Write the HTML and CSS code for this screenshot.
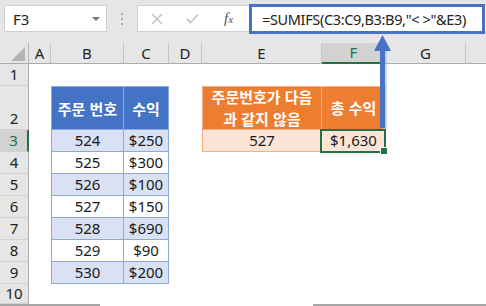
FILE: index.html
```html
<!DOCTYPE html>
<html lang="ko">
<head>
<meta charset="utf-8">
<link rel="stylesheet" href="styles.css">
</head>
<body>
<div class="app">
  <div class="topbar">
    <div class="namebox"><span class="nb-text">F3</span><span class="dd"></span></div>
    <div class="dots"><i></i><i></i><i></i></div>
    <div class="fbar">
      <svg class="ic ic-x" width="12" height="12" viewBox="0 0 12 12"><path d="M1 1L11 11M11 1L1 11" stroke="#c3c3c3" stroke-width="1.6" fill="none"/></svg>
      <svg class="ic ic-ok" width="13" height="11" viewBox="0 0 13 11"><path d="M1 6L4.5 9.5L12 1.5" stroke="#c3c3c3" stroke-width="1.8" fill="none"/></svg>
      <span class="fx">f<sub>x</sub></span>
      <div class="formula">=SUMIFS(C3:C9,B3:B9,"&lt; &gt;"&amp;E3)</div>
    </div>
  </div>

  <div class="sheet">
    <!-- header row -->
    <div class="corner"><span class="tri"></span></div>
    <div class="ch">A</div><div class="ch">B</div><div class="ch">C</div><div class="ch">D</div>
    <div class="ch">E</div><div class="ch ch-sel">F</div><div class="ch">G</div><div class="ch ch-last"></div>

    <!-- row 1 -->
    <div class="rh">1</div>
    <div></div><div></div><div></div><div></div><div></div><div></div><div></div><div></div>

    <!-- row 2 -->
    <div class="rh rh-bottom">2</div>
    <div></div>
    <div class="tb tb-h tb-l tb-t">주문 번호</div>
    <div class="tb tb-h tb-t">수익</div>
    <div></div>
    <div class="ot ot-h ot-l ot-t">주문번호가 다음<br>과 같지 않음</div>
    <div class="ot ot-h ot-t">총 수익</div>
    <div></div><div></div>

    <!-- row 3 -->
    <div class="rh rh-sel">3</div>
    <div></div>
    <div class="tb tb-a tb-l">524</div>
    <div class="tb tb-a">$250</div>
    <div></div>
    <div class="ot ot-d ot-l">527</div>
    <div class="ot ot-d sel">$1,630</div>
    <div></div><div></div>

    <!-- row 4 -->
    <div class="rh">4</div>
    <div></div>
    <div class="tb tb-l">525</div>
    <div class="tb">$300</div>
    <div></div><div></div><div></div><div></div><div></div>

    <!-- row 5 -->
    <div class="rh">5</div>
    <div></div>
    <div class="tb tb-a tb-l">526</div>
    <div class="tb tb-a">$100</div>
    <div></div><div></div><div></div><div></div><div></div>

    <!-- row 6 -->
    <div class="rh">6</div>
    <div></div>
    <div class="tb tb-l">527</div>
    <div class="tb">$150</div>
    <div></div><div></div><div></div><div></div><div></div>

    <!-- row 7 -->
    <div class="rh">7</div>
    <div></div>
    <div class="tb tb-a tb-l">528</div>
    <div class="tb tb-a">$690</div>
    <div></div><div></div><div></div><div></div><div></div>

    <!-- row 8 -->
    <div class="rh">8</div>
    <div></div>
    <div class="tb tb-l">529</div>
    <div class="tb">$90</div>
    <div></div><div></div><div></div><div></div><div></div>

    <!-- row 9 -->
    <div class="rh">9</div>
    <div></div>
    <div class="tb tb-a tb-l">530</div>
    <div class="tb tb-a">$200</div>
    <div></div><div></div><div></div><div></div><div></div>

    <!-- row 10 -->
    <div class="rh">10</div>
    <div></div><div></div><div></div><div></div><div></div><div></div><div></div><div></div>
  </div>

  <div class="tabs"><span class="seg seg-l"></span><span class="seg seg-r"></span></div>

  <svg class="arrow" width="24" height="96" viewBox="0 0 24 96">
    <rect x="11" y="12" width="5" height="83" fill="#b9c6df" opacity="0.6"/>
    <rect x="9" y="12" width="5" height="82" fill="#4a72c4"/>
    <path d="M11.5 1L20 17L3 17Z" fill="#4a72c4"/>
  </svg>
</div>
</body>
</html>
```

FILE: styles.css
```css
* { box-sizing: border-box; }

html, body {
  margin: 0;
  padding: 0;
  background: #ffffff;
}

.app {
  position: relative;
  width: 486px;
  height: 306px;
  overflow: hidden;
  font-family: "Noto Sans", "Noto Sans CJK KR", sans-serif;
  color: #1a1a1a;
}

/* ---------- formula bar ---------- */
.topbar {
  height: 43px;
  background: #e6e6e6;
  display: flex;
  align-items: flex-start;
  padding-top: 5px;
}

.namebox {
  margin-left: 4px;
  width: 103px;
  height: 27px;
  background: #ffffff;
  border: 1px solid #d0d0d0;
  display: flex;
  align-items: center;
  justify-content: space-between;
  padding: 0 6px 0 8px;
  font-size: 15px;
  color: #222;
}

.dd {
  width: 0;
  height: 0;
  border-left: 4px solid transparent;
  border-right: 4px solid transparent;
  border-top: 4px solid #777;
}

.dots {
  width: 30px;
  height: 27px;
  display: flex;
  flex-direction: column;
  align-items: center;
  justify-content: center;
  gap: 3px;
}
.dots i {
  display: block;
  width: 2px;
  height: 2px;
  background: #a8a8a8;
}

.fbar {
  flex: 1;
  height: 27px;
  background: #ffffff;
  border: 1px solid #d0d0d0;
  border-right: none;
  display: flex;
  align-items: center;
  padding-left: 13px;
}

.ic-x { margin-right: 23px; }
.ic-ok { margin-right: 25px; }

.fx {
  font-family: "Liberation Serif", serif;
  font-style: italic;
  font-size: 15px;
  color: #555;
  line-height: 1;
}
.fx sub {
  font-size: 11px;
  vertical-align: 0;
}

.formula {
  margin-left: auto;
  margin-right: 1px;
  align-self: center;
  width: 236px;
  height: 30px;
  border: 3px solid #4a72c4;
  background: #ffffff;
  display: flex;
  align-items: center;
  padding-left: 10px;
  font-size: 14.5px;
  letter-spacing: -0.35px;
  color: #222;
  white-space: nowrap;
  overflow: hidden;
}

/* ---------- sheet grid ---------- */
.sheet {
  display: grid;
  grid-template-columns: 29px 22px 73px 45px 33px 120px 64px 80px 20px;
  grid-template-rows: 21px 22px 44px repeat(7, 22px) 20px;
  font-size: 15px;
}

.corner {
  background: #e6e6e6;
  border-right: 1px solid #b5b5b5;
  border-bottom: 1px solid #ababab;
  position: relative;
}
.tri {
  position: absolute;
  right: 3px;
  bottom: 2px;
  width: 0;
  height: 0;
  border-left: 14px solid transparent;
  border-bottom: 14px solid #b4b4b4;
}

.ch {
  background: #e6e6e6;
  border-right: 1px solid #c4c4c4;
  border-bottom: 1px solid #ababab;
  display: flex;
  align-items: center;
  justify-content: center;
  color: #222;
  line-height: 1;
}
.ch-sel {
  background: #d2d2d2;
  border-bottom: 2px solid #217346;
  color: #217346;
}
.ch-last { border-right: none; }

.rh {
  background: #e6e6e6;
  border-right: 1px solid #ababab;
  border-bottom: 1px solid #d2d2d2;
  display: flex;
  align-items: center;
  justify-content: center;
  color: #222;
  line-height: 1;
}
.rh-bottom {
  align-items: flex-end;
  padding-bottom: 3px;
}
.rh-sel {
  background: #d2d2d2;
  border-right: 2px solid #217346;
  color: #217346;
}

/* blue table */
.tb {
  display: flex;
  align-items: center;
  justify-content: center;
  border-right: 1px solid #8eaadb;
  border-bottom: 1px solid #8eaadb;
  background: #ffffff;
  color: #1a1a1a;
  line-height: 1;
}
.tb-l { border-left: 1px solid #8eaadb; }
.tb-t { border-top: 1px solid #8eaadb; }
.tb-a { background: #d9e1f2; }
.tb-h {
  background: #4472c4;
  color: #ffffff;
  font-family: "Noto Sans CJK KR", sans-serif;
  font-weight: 700;
  font-size: 15px;
}

/* orange table */
.ot {
  display: flex;
  align-items: center;
  justify-content: center;
  text-align: center;
  border-right: 1px solid #f4b084;
  border-bottom: 1px solid #f4b084;
  line-height: 1;
}
.ot-l { border-left: 1px solid #f4b084; }
.ot-t { border-top: 1px solid #f4b084; }
.ot-h {
  background: #ed7d31;
  color: #ffffff;
  font-family: "Noto Sans CJK KR", sans-serif;
  font-weight: 700;
  font-size: 15px;
  line-height: 22px;
}
.ot-d { background: #fce4d6; color: #1a1a1a; }

.sel { position: relative; }
.sel::after {
  content: "";
  position: absolute;
  left: -2px;
  top: -1px;
  right: -1px;
  bottom: -2px;
  border: 2px solid #217346;
}
.sel::before {
  content: "";
  position: absolute;
  right: -3px;
  bottom: -4px;
  width: 6px;
  height: 6px;
  background: #217346;
  border: 1px solid #ffffff;
  z-index: 1;
}

/* bottom sheet tab edge */
.tabs {
  display: flex;
  justify-content: space-between;
  height: 2px;
}
.seg { display: block; height: 2px; background: #a6a6a6; }
.seg-l { width: 100px; }
.seg-r { width: 173px; }

.arrow {
  position: absolute;
  left: 371px;
  top: 34px;
}
```
